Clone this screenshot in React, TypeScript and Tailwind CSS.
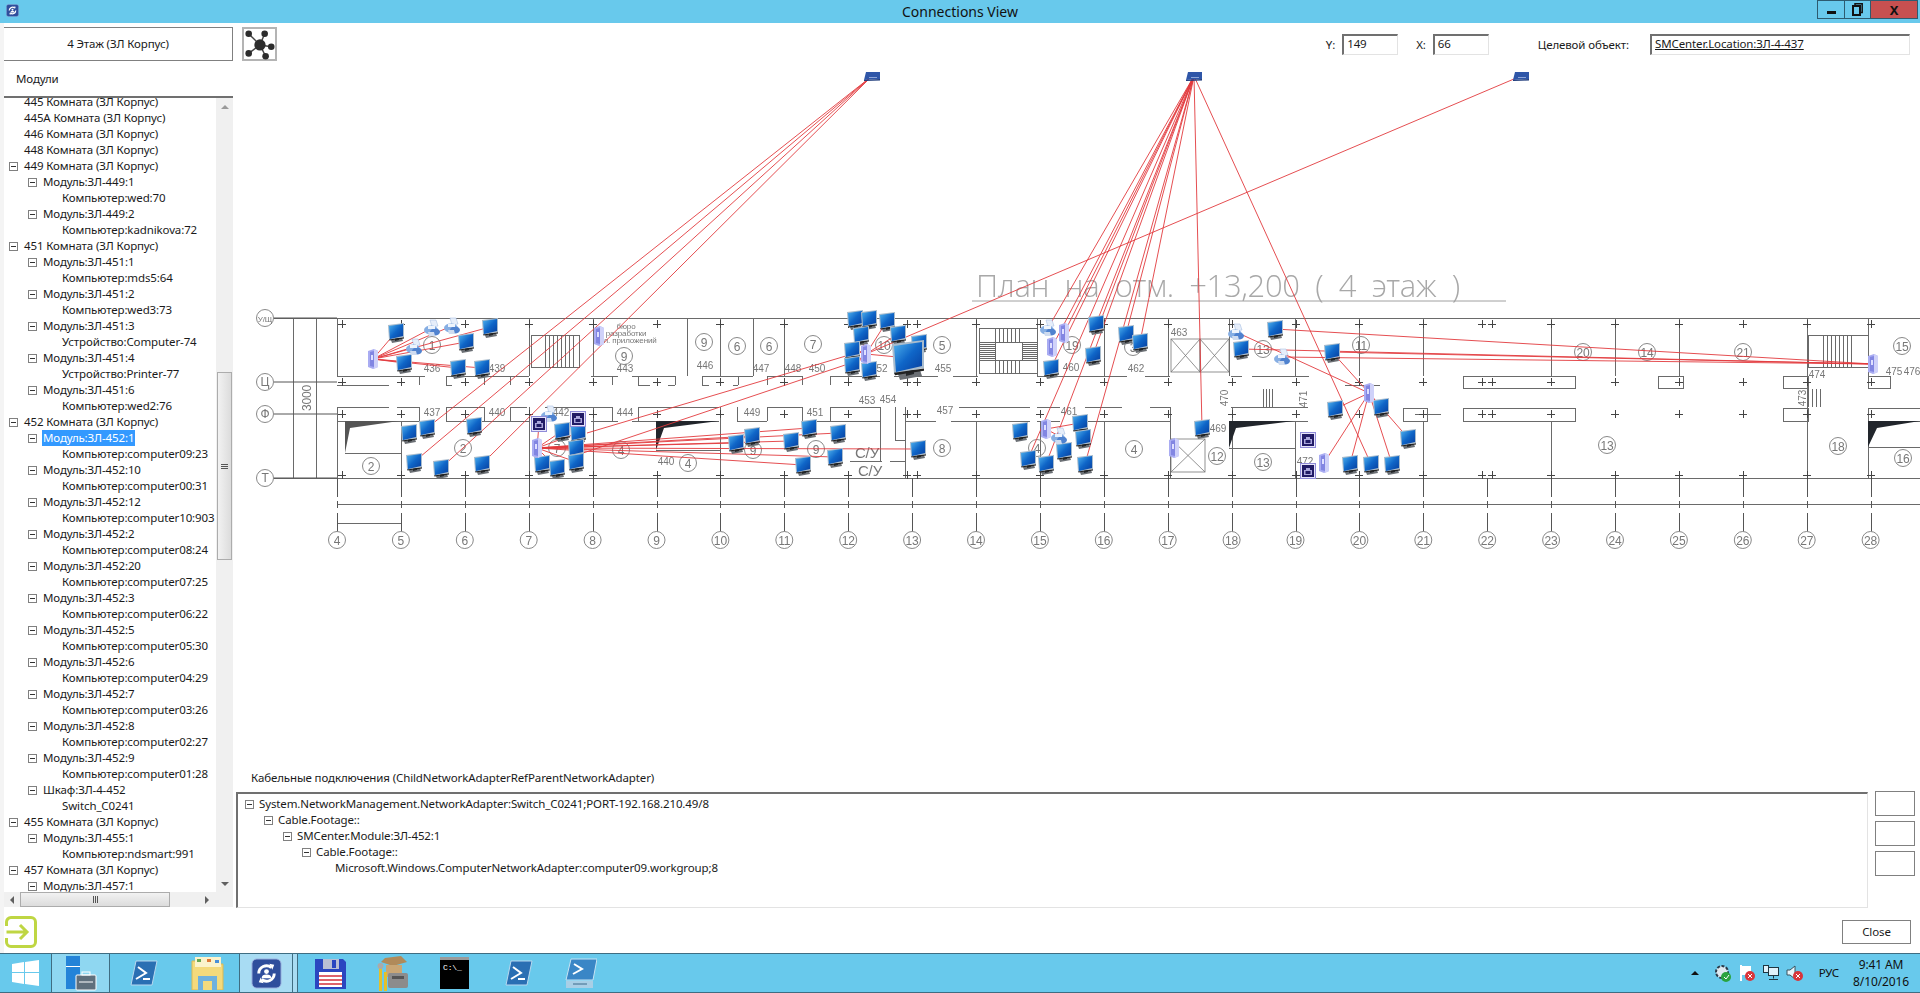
import React from "react";

type P = [number, number];
const X = (n: number) => 337 + (n - 4) * 63.9;

const rooms = (n: string) => `${n} Комната (ЗЛ Корпус)`;
const leftTree: { l: number; t: string; e?: boolean; s?: boolean }[] = [
  { l: 0, t: rooms("445") },
  { l: 0, t: rooms("445А") },
  { l: 0, t: rooms("446") },
  { l: 0, t: rooms("448") },
  { l: 0, t: rooms("449"), e: true },
  { l: 1, t: "Модуль:ЗЛ-449:1", e: true },
  { l: 2, t: "Компьютер:wed:70" },
  { l: 1, t: "Модуль:ЗЛ-449:2", e: true },
  { l: 2, t: "Компьютер:kadnikova:72" },
  { l: 0, t: rooms("451"), e: true },
  { l: 1, t: "Модуль:ЗЛ-451:1", e: true },
  { l: 2, t: "Компьютер:mds5:64" },
  { l: 1, t: "Модуль:ЗЛ-451:2", e: true },
  { l: 2, t: "Компьютер:wed3:73" },
  { l: 1, t: "Модуль:ЗЛ-451:3", e: true },
  { l: 2, t: "Устройство:Computer-74" },
  { l: 1, t: "Модуль:ЗЛ-451:4", e: true },
  { l: 2, t: "Устройство:Printer-77" },
  { l: 1, t: "Модуль:ЗЛ-451:6", e: true },
  { l: 2, t: "Компьютер:wed2:76" },
  { l: 0, t: rooms("452"), e: true },
  { l: 1, t: "Модуль:ЗЛ-452:1", e: true, s: true },
  { l: 2, t: "Компьютер:computer09:23" },
  { l: 1, t: "Модуль:ЗЛ-452:10", e: true },
  { l: 2, t: "Компьютер:computer00:31" },
  { l: 1, t: "Модуль:ЗЛ-452:12", e: true },
  { l: 2, t: "Компьютер:computer10:903" },
  { l: 1, t: "Модуль:ЗЛ-452:2", e: true },
  { l: 2, t: "Компьютер:computer08:24" },
  { l: 1, t: "Модуль:ЗЛ-452:20", e: true },
  { l: 2, t: "Компьютер:computer07:25" },
  { l: 1, t: "Модуль:ЗЛ-452:3", e: true },
  { l: 2, t: "Компьютер:computer06:22" },
  { l: 1, t: "Модуль:ЗЛ-452:5", e: true },
  { l: 2, t: "Компьютер:computer05:30" },
  { l: 1, t: "Модуль:ЗЛ-452:6", e: true },
  { l: 2, t: "Компьютер:computer04:29" },
  { l: 1, t: "Модуль:ЗЛ-452:7", e: true },
  { l: 2, t: "Компьютер:computer03:26" },
  { l: 1, t: "Модуль:ЗЛ-452:8", e: true },
  { l: 2, t: "Компьютер:computer02:27" },
  { l: 1, t: "Модуль:ЗЛ-452:9", e: true },
  { l: 2, t: "Компьютер:computer01:28" },
  { l: 1, t: "Шкаф:ЗЛ-4-452", e: true },
  { l: 2, t: "Switch_C0241" },
  { l: 0, t: rooms("455"), e: true },
  { l: 1, t: "Модуль:ЗЛ-455:1", e: true },
  { l: 2, t: "Компьютер:ndsmart:991" },
  { l: 0, t: rooms("457"), e: true },
  { l: 1, t: "Модуль:ЗЛ-457:1", e: true },
];

const cableTree: { t: string; e: boolean; pad: string }[] = [
  { t: "System.NetworkManagement.NetworkAdapter:Switch_C0241;PORT-192.168.210.49/8", e: true, pad: "pl-[7px]" },
  { t: "Cable.Footage::", e: true, pad: "pl-[26px]" },
  { t: "SMCenter.Module:ЗЛ-452:1", e: true, pad: "pl-[45px]" },
  { t: "Cable.Footage::", e: true, pad: "pl-[64px]" },
  { t: "Microsoft.Windows.ComputerNetworkAdapter:computer09.workgroup;8", e: false, pad: "pl-[83px]" },
];

const pads = ["pl-[5px]", "pl-[24px]", "pl-[43px]"];

function Exp({ hidden }: { hidden?: boolean }) {
  return (
    <span className={`flex h-[9px] w-[9px] shrink-0 items-center justify-center ${hidden ? "" : "border border-[#808080] bg-white"}`}>
      {!hidden && <span className="h-px w-[5px] bg-[#333]" />}
    </span>
  );
}

const pcs: P[] = [
  [396, 332], [490, 327], [466, 342], [404, 363], [458, 368], [482, 368],
  [409, 433], [427, 428], [474, 426], [414, 462], [441, 468], [482, 464],
  [562, 431], [578, 433], [576, 448], [576, 462], [542, 464], [557, 468],
  [736, 443], [752, 436], [791, 441], [809, 428], [838, 433], [835, 457], [803, 465],
  [855, 319], [869, 319], [887, 321], [861, 335], [898, 334], [919, 343], [852, 350], [852, 365], [869, 370],
  [918, 449], [1020, 431], [1080, 423], [1083, 438], [1064, 451], [1028, 459], [1046, 464], [1085, 464],
  [1051, 368], [1093, 355], [1096, 324], [1126, 334], [1140, 342], [1202, 428], [1275, 329], [1241, 349],
  [1332, 352], [1335, 409], [1381, 407], [1408, 438], [1350, 464], [1371, 464], [1392, 464],
];
const printers: P[] = [[432, 328], [452, 326], [414, 347], [549, 414], [1048, 328], [1059, 436], [1236, 332], [1282, 357]];
const servers: P[] = [[373, 359], [599, 336], [537, 448], [866, 354], [1064, 333], [1052, 347], [1046, 429], [1174, 448], [1369, 393], [1324, 463], [1873, 364]];
const jacks: P[] = [[539, 424], [578, 419], [1308, 440], [1308, 471]];
const tops: P[] = [[872, 76], [1194, 76], [1521, 76]];

const links: [P, P[]][] = [
  [[872, 76], [[427, 428], [414, 462], [441, 468], [482, 464]]],
  [[1194, 76], [[1028, 459], [1046, 464], [1048, 328], [1064, 333], [1052, 347], [1051, 368], [1096, 324], [1093, 355], [1085, 464], [1126, 334], [1140, 342], [1202, 428], [1371, 464]]],
  [[1521, 76], [[866, 354]]],
  [[373, 359], [[396, 332], [432, 328], [452, 326], [414, 347], [490, 327], [466, 342], [404, 363], [458, 368], [482, 368]]],
  [[537, 448], [[539, 424], [562, 431], [578, 433], [576, 448], [576, 462], [542, 464], [557, 468], [736, 443], [752, 436], [791, 441], [809, 428], [838, 433], [835, 457], [803, 465], [918, 449]]],
  [[587, 433], [[866, 350]]],
  [[583, 453], [[866, 358]]],
  [[866, 354], [[855, 319], [887, 321], [861, 335], [898, 334], [852, 350], [852, 365], [869, 370], [908, 358]]],
  [[1046, 429], [[1080, 423], [1059, 436]]],
  [[1369, 393], [[1236, 332], [1335, 409], [1332, 352], [1381, 407], [1408, 438], [1350, 464], [1392, 464], [1324, 463]]],
  [[1873, 364], [[1275, 329], [1241, 349], [1332, 352], [1282, 357]]],
];

const hSegs: [number, number, number][] = [
  [265, 1920, 318], [265, 1920, 478], [337, 1920, 504], [337, 401, 523],
  [337, 425, 376], [446, 529, 376], [591, 618, 376], [632, 676, 376], [702, 753, 376], [767, 802, 376], [830, 880, 376],
  [894, 938, 376], [953, 978, 376], [1037, 1127, 376], [1145, 1170, 376], [1231, 1242, 376], [1252, 1309, 376],
  [337, 389, 385], [446, 452, 385], [638, 650, 385], [668, 675, 385], [702, 709, 385], [733, 738, 385], [1345, 1380, 385],
  [337, 389, 407], [397, 419, 407], [446, 484, 407], [510, 527, 407], [545, 612, 407], [638, 719, 407], [767, 802, 407], [830, 880, 407],
  [959, 1030, 407], [1037, 1060, 407], [1085, 1122, 407], [1150, 1170, 407], [1231, 1308, 407],
  [337, 421, 421], [446, 529, 421], [591, 618, 421], [632, 719, 421], [737, 767, 421], [802, 880, 421],
  [905, 936, 421], [951, 1030, 421], [1037, 1060, 421], [1085, 1122, 421], [1122, 1170, 421], [1231, 1308, 421],
  [345, 401, 453], [656, 720, 450], [1229, 1295, 448], [1868, 1920, 447], [850, 882, 461], [890, 905, 461], [895, 905, 440],
  [1415, 1424, 414], [1424, 1441, 414],
];
const vSegs: [number, number, number][] = [
  [293, 318, 478], [316, 318, 478],
  [337, 318, 376], [337, 407, 478], [401, 421, 478], [529, 318, 376], [529, 407, 478], [593, 318, 376], [593, 407, 478],
  [687, 318, 376], [720, 318, 376], [753, 318, 376], [784, 318, 376], [720, 407, 478], [848, 376, 385],
  [419, 376, 385], [446, 376, 385], [484, 376, 385], [510, 376, 385], [612, 376, 385], [638, 376, 385], [675, 376, 385], [702, 376, 385], [738, 376, 385], [767, 376, 385], [802, 376, 385], [830, 376, 385],
  [419, 407, 421], [446, 407, 421], [484, 407, 421], [510, 407, 421], [612, 407, 421], [638, 407, 421], [737, 407, 421], [767, 407, 421], [802, 407, 421], [830, 407, 421],
  [880, 407, 461], [895, 407, 440], [905, 407, 478], [976, 318, 376], [976, 421, 478], [1037, 318, 376], [1040, 421, 478],
  [1104, 318, 376], [1104, 421, 478], [1168, 318, 376], [1170, 407, 478], [1229, 318, 376], [1232, 407, 478], [1295, 318, 376], [1295, 421, 478],
  [1359, 318, 376], [1423, 318, 376], [1423, 421, 478], [1551, 318, 376], [1551, 421, 478], [1615, 318, 376], [1679, 318, 376], [1807, 318, 478], [1868, 318, 376], [1868, 421, 478],
];
const boxes: [number, number, number, number][] = [
  [1463, 376, 112, 12], [1463, 408, 112, 13], [1658, 376, 25, 12], [1783, 376, 25, 12], [1783, 408, 25, 13], [1868, 376, 22, 12], [1868, 408, 52, 13], [1403, 408, 24, 13],
  [531, 335, 48, 32], [979, 328, 58, 45], [995, 342, 27, 18], [1808, 335, 60, 32],
];
const hatches: [number, number, number, number, number][] = [
  [545, 575, 335, 367, 4], [1823, 1853, 335, 367, 4], [1808, 1823, 389, 407, 4], [1263, 1274, 389, 407, 3], [995, 1022, 328, 342, 4], [995, 1022, 360, 373, 4],
];
const wedges: [string, string][] = [
  ["345,421 399,421 350,428 345,453", "#555"],
  ["656,421 719,421 664,428 656,450", "#22262c"],
  ["1229,421 1294,421 1236,428 1229,448", "#22262c"],
  ["1868,421 1920,421 1877,428 1868,447", "#22262c"],
];
const circles: [number, number, string][] = [
  [432, 345, "1"], [463, 448, "2"], [371, 466, "2"], [557, 448, "7"], [621, 450, "4"], [688, 463, "4"], [704, 342, "9"], [737, 346, "6"], [769, 346, "6"], [813, 344, "7"], [624, 356, "9"], [753, 450, "9"], [816, 449, "9"],
  [884, 345, "10"], [942, 345, "5"], [1072, 345, "19"], [1133, 347, "3"], [1037, 448, "4"], [1134, 449, "4"], [942, 448, "8"], [1217, 456, "12"], [1263, 349, "13"], [1361, 345, "11"], [1263, 462, "13"],
  [1583, 352, "20"], [1647, 352, "14"], [1743, 352, "21"], [1902, 346, "15"], [1607, 445, "13"], [1838, 446, "18"], [1903, 458, "16"],
];
const roomNums: [number, number, string][] = [
  [432, 368, "436"], [497, 368, "439"], [432, 412, "437"], [497, 412, "440"], [561, 412, "442"], [625, 368, "443"], [625, 412, "444"], [705, 365, "446"], [761, 368, "447"], [793, 368, "448"], [817, 368, "450"], [752, 412, "449"], [815, 412, "451"], [666, 461, "440"],
  [867, 400, "453"], [888, 399, "454"], [943, 368, "455"], [945, 410, "457"], [1071, 367, "460"], [1069, 411, "461"], [1136, 368, "462"], [1179, 332, "463"], [1218, 428, "469"], [1305, 461, "472"], [882, 368, "52"],
  [1817, 374, "474"], [1894, 371, "475"], [1912, 371, "476"],
];
const rotated: [number, number, string][] = [[1224, 398, "470"], [1303, 399, "471"], [1802, 398, "473"]];
const axisLeft: [number, string][] = [[318, "У/Щ"], [382, "Ц"], [414, "Ф"], [478, "Т"]];

function Pc({ x, y, s = 1 }: { x: number; y: number; s?: number }) {
  return (
    <g transform={`translate(${x} ${y}) scale(${s})`}>
      <polygon points="-5,8 6,6 7,9 -4,11" fill="#6b6f74" />
      <polygon points="-1,6 3,5 3,8 -1,9" fill="#26292c" />
      <polygon points="-8,-7 8,-9 8,5 -7,8" fill="#a9bccd" />
      <polygon points="-7,-6 7,-8 7,4 -6,7" fill="url(#scr)" />
      <polygon points="-7,7.4 8,5.2 8,6.4 -6.5,8.6" fill="#222" />
    </g>
  );
}
function Server({ x, y }: { x: number; y: number }) {
  return (
    <g transform={`translate(${x} ${y})`}>
      <polygon points="-5,-8 1,-10 5,-8 5,8 0,10 -5,8" fill="#a9acf2" />
      <polygon points="-3,-7 1,-8 1,8 -3,7" fill="#8286e2" />
      <rect x="-2" y="-4" width="2" height="5" fill="#dfe0ff" />
      <polygon points="1,-10 5,-8 5,8 1,10" fill="#cfd1f9" />
    </g>
  );
}
function Printer({ x, y }: { x: number; y: number }) {
  return (
    <g transform={`translate(${x} ${y})`}>
      <polygon points="-2,-8 4,-8 6,-2 0,-1" fill="#e6eefa" stroke="#9db7de" strokeWidth="0.5" />
      <ellipse cx="-1" cy="2" rx="7" ry="4.5" fill="#86aee3" />
      <ellipse cx="3" cy="4" rx="5" ry="3.5" fill="#4f82cf" />
      <rect x="-4" y="-2" width="7" height="3" fill="#eef4fc" />
      <polygon points="-4,4 2,4 3,8 -3,8" fill="#cfdcf0" />
    </g>
  );
}
function Jack({ x, y }: { x: number; y: number }) {
  return (
    <g transform={`translate(${x} ${y})`}>
      <rect x="-7.5" y="-7.5" width="15" height="15" fill="#e6e4fa" stroke="#8f8bd8" />
      <rect x="-6" y="-6" width="12" height="12" fill="#211b66" />
      <polygon points="-4,4 -4,-1 -2,-1 -2,-3 2,-3 2,-1 4,-1 4,4" fill="#aaa6dc" />
      <rect x="-2.5" y="0" width="5" height="3" fill="#211b66" />
    </g>
  );
}
function TopDevice({ x, y }: { x: number; y: number }) {
  return (
    <g transform={`translate(${x} ${y})`}>
      <polygon points="-6,-4 8,-4 8,3 -8,4" fill="#2f56a8" />
      <polygon points="-8,4 8,3 8,4.5 -8,5" fill="#1d3a7a" />
      <rect x="-3" y="1" width="8" height="1" fill="#8fa6d8" />
    </g>
  );
}

function FloorPlan() {
  const axisNums = Array.from({ length: 25 }, (_, i) => i + 4);
  return (
    <svg viewBox="236 64 1684 706" className="block h-[706px] w-[1684px] blur-[0.35px]">
      <defs>
        <linearGradient id="scr" x1="0" y1="0" x2="1" y2="1">
          <stop offset="0" stopColor="#4fb2ee" />
          <stop offset="0.5" stopColor="#0f66c8" />
          <stop offset="1" stopColor="#073e9e" />
        </linearGradient>
      </defs>

      <text x="976" y="297" fontFamily="Open Sans" fontWeight="300" fontSize="31" fill="#a8a8a8" textLength="484" lengthAdjust="spacing" xmlSpace="preserve">
        План  на  отм.  +13,200  (  4  этаж  )
      </text>
      <line x1="972" y1="301" x2="1506" y2="301" stroke="#a0a0a0" />

      <g stroke="#6a6a6a" strokeWidth="1" fill="none" shapeRendering="crispEdges">
        {hSegs.map(([a, b, y], i) => <line key={i} x1={a} x2={b} y1={y} y2={y} />)}
        {vSegs.map(([x, a, b], i) => <line key={i} x1={x} x2={x} y1={a} y2={b} />)}
        {boxes.map(([x, y, w, h], i) => <rect key={i} x={x} y={y} width={w} height={h} />)}
        {hatches.map(([a, b, y1, y2, st], i) =>
          Array.from({ length: Math.floor((b - a) / st) + 1 }, (_, k) => (
            <line key={`${i}-${k}`} x1={a + k * st} x2={a + k * st} y1={y1} y2={y2} />
          ))
        )}
        {[[979, 995, 328, 373], [1022, 1037, 328, 373]].map(([a, b, y1, y2], i) =>
          [0, 1, 2, 3, 4, 5, 6, 7, 8, 9].map((k) => (
            <line key={`h${i}-${k}`} x1={a} x2={b} y1={y1 + 14 + k * 2} y2={y1 + 14 + k * 2} />
          ))
        )}
      </g>

      <g stroke="#777" strokeWidth="0.8" fill="none">
        <rect x="1171" y="339" width="29" height="33" />
        <rect x="1200" y="339" width="29" height="33" />
        <path d="M1171 339 L1200 372 M1200 339 L1171 372 M1200 339 L1229 372 M1229 339 L1200 372" />
        <rect x="1171" y="439" width="34" height="33" />
        <path d="M1171 439 L1205 472 M1205 439 L1171 472" />
      </g>

      {wedges.map(([p, c], i) => <polygon key={i} points={p} fill={c} />)}

      {/* columns, crosses and axes */}
      <g stroke="#444" strokeWidth="1" fill="none" shapeRendering="crispEdges">
        {axisNums.map((n) => {
          const x = Math.round(X(n));
          const crossXs = n === 4 ? [x + 5] : n === 13 || n === 22 ? [x - 5, x + 5] : [x];
          return (
            <g key={n}>
              <line x1={x} x2={x} y1={478} y2={497} stroke="#555" />
              <line x1={x} x2={x} y1={501} y2={508} stroke="#555" />
              <line x1={x} x2={x} y1={513} y2={532} stroke="#555" />
              {crossXs.flatMap((cx) =>
                [324, 382, 414, 475].map((y) => (
                  <g key={`${cx}-${y}`}>
                    <line x1={cx - 4} x2={cx + 4} y1={y} y2={y} />
                    <line x1={cx} x2={cx} y1={y - 4} y2={y + 4} />
                  </g>
                ))
              )}
            </g>
          );
        })}
      </g>
      <g fill="none" stroke="#888" strokeWidth="1">
        {axisNums.map((n) => <circle key={n} cx={X(n)} cy={540} r={8.5} fill="#fff" />)}
        {axisLeft.map(([y, t]) => (
          <g key={t}>
            <line x1={274} x2={337} y1={y} y2={y} stroke="#555" />
            <circle cx={265} cy={y} r={8.5} fill="#fff" />
          </g>
        ))}
        {circles.map(([x, y, t], i) => <circle key={i} cx={x} cy={y} r={8.5} />)}
      </g>
      <g fontFamily="Liberation Sans" fill="#777" textAnchor="middle">
        {axisNums.map((n) => <text key={n} x={X(n)} y={544.5} fontSize="12">{n}</text>)}
        {axisLeft.map(([y, t]) => <text key={t} x={265} y={y + 4} fontSize={t.length > 1 ? 8 : 12}>{t}</text>)}
        {circles.map(([x, y, t], i) => <text key={i} x={x} y={y + 4.5} fontSize="12">{t}</text>)}
      </g>
      <g fontFamily="Liberation Sans" fill="#777" fontSize="10" textAnchor="middle">
        {roomNums.map(([x, y, t], i) => <text key={i} x={x} y={y + 3.5}>{t}</text>)}
        {rotated.map(([x, y, t], i) => <text key={i} transform={`translate(${x} ${y}) rotate(-90)`} y={3.5}>{t}</text>)}
        <text transform="translate(311 398) rotate(-90)" fontSize="12">3000</text>
        <text x="867" y="458" fontSize="15">С/У</text>
        <text x="870" y="476" fontSize="15">С/У</text>
        <text x="626" y="329" fontSize="8">бюро</text>
        <text x="626" y="336" fontSize="8">разработки</text>
        <text x="628" y="343" fontSize="8">пл. приложений</text>
      </g>

      <g stroke="#e23a3d" strokeWidth="0.9" fill="none">
        {links.flatMap(([from, tos], i) =>
          tos.map((to, j) => <line key={`${i}-${j}`} x1={from[0]} y1={from[1]} x2={to[0]} y2={to[1]} />)
        )}
      </g>

      {pcs.map(([x, y], i) => <Pc key={i} x={x} y={y} />)}
      <Pc x={908} y={358} s={2} />
      {servers.map(([x, y], i) => <Server key={i} x={x} y={y} />)}
      {printers.map(([x, y], i) => <Printer key={i} x={x} y={y} />)}
      {jacks.map(([x, y], i) => <Jack key={i} x={x} y={y} />)}
      {tops.map(([x, y], i) => <TopDevice key={i} x={x} y={y} />)}
    </svg>
  );
}

function AppIcon({ size }: { size: number }) {
  return (
    <svg width={size} height={size} viewBox="0 0 32 32">
      <rect x="1" y="1" width="30" height="30" rx="5" fill="#2f4e9c" stroke="#9fb4e0" />
      <path d="M8 16a8 8 0 0 1 13-6.2" fill="none" stroke="#fff" strokeWidth="3" />
      <path d="M24 16a8 8 0 0 1-13 6.2" fill="none" stroke="#fff" strokeWidth="3" />
      <path d="M19 6l5 1-2 5zM13 26l-5-1 2-5z" fill="#fff" />
      <circle cx="16" cy="14" r="2.5" fill="#fff" />
      <path d="M11 21c0-3 2-4 5-4s5 1 5 4z" fill="#fff" />
    </svg>
  );
}

function NetworkGlyph() {
  return (
    <svg width="33" height="32" viewBox="0 0 33 32">
      <g stroke="#444" strokeWidth="1.5">
        <line x1="17" y1="17" x2="5" y2="5" />
        <line x1="17" y1="17" x2="22" y2="5" />
        <line x1="17" y1="17" x2="29" y2="19" />
        <line x1="17" y1="17" x2="23" y2="29" />
        <line x1="17" y1="17" x2="5" y2="26" />
      </g>
      <g fill="#2c2c2c">
        <circle cx="17" cy="17" r="6" />
        <circle cx="5" cy="5" r="3.5" />
        <circle cx="22" cy="5" r="3.5" />
        <circle cx="29" cy="19" r="3.5" />
        <circle cx="23" cy="29" r="3.5" />
        <circle cx="5" cy="26" r="3.5" />
      </g>
    </svg>
  );
}

function TriUp() {
  return <span className="h-0 w-0 border-x-[4px] border-b-[4px] border-x-transparent border-b-[#9a9a9a]" />;
}
function TriDown() {
  return <span className="h-0 w-0 border-x-[4px] border-t-[4px] border-x-transparent border-t-[#606060]" />;
}
function TriLeft() {
  return <span className="h-0 w-0 border-y-[4px] border-r-[4px] border-y-transparent border-r-[#606060]" />;
}
function TriRight() {
  return <span className="h-0 w-0 border-y-[4px] border-l-[4px] border-y-transparent border-l-[#606060]" />;
}

function SideTree() {
  return (
    <div className="flex min-h-0 flex-1 flex-col border-t-2 border-[#707070] pb-px">
      <div className="flex min-h-0 flex-1">
        <div className="min-w-0 flex-1 overflow-hidden">
          <div className="-mt-[4px]">
            {leftTree.map((r, i) => (
              <div key={i} className={`flex h-4 items-center gap-[6px] whitespace-nowrap ${pads[r.l]}`}>
                <Exp hidden={!r.e} />
                <span className={r.s ? "-ml-px bg-[#3399ff] px-px text-white" : ""}>{r.t}</span>
              </div>
            ))}
          </div>
        </div>
        <div className="flex w-[17px] shrink-0 flex-col items-center bg-[#f0f0f0]">
          <div className="flex h-[17px] items-center justify-center"><TriUp /></div>
          <div className="mt-[257px] flex h-[188px] w-[15px] items-center justify-center border border-[#acacac] bg-gradient-to-r from-[#f2f2f2] to-[#dcdcdc]">
            <div className="flex flex-col gap-px">
              <span className="h-px w-[7px] bg-[#555]" />
              <span className="h-px w-[7px] bg-[#555]" />
              <span className="h-px w-[7px] bg-[#555]" />
            </div>
          </div>
          <div className="mt-auto flex h-[17px] items-center justify-center"><TriDown /></div>
        </div>
      </div>
      <div className="flex h-[15px] shrink-0 items-center bg-[#f0f0f0]">
        <div className="flex w-[16px] justify-center"><TriLeft /></div>
        <div className="flex h-[15px] w-[150px] items-center justify-center border border-[#acacac] bg-gradient-to-b from-[#f2f2f2] to-[#dcdcdc]">
          <div className="flex gap-px">
            <span className="h-[7px] w-px bg-[#555]" />
            <span className="h-[7px] w-px bg-[#555]" />
            <span className="h-[7px] w-px bg-[#555]" />
          </div>
        </div>
        <div className="ml-[33px] flex w-[8px] justify-center"><TriRight /></div>
      </div>
    </div>
  );
}

function PsIcon() {
  return (
    <svg width="28" height="28" viewBox="0 0 28 28">
      <polygon points="6,2 27,2 22,26 1,26" fill="#2a6fb3" stroke="#b8d8ee" />
      <path d="M8 8l8 6-10 6" fill="none" stroke="#fff" strokeWidth="2" />
      <rect x="13" y="19" width="7" height="2" fill="#fff" />
    </svg>
  );
}

function Taskbar() {
  return (
    <div className="flex h-[40px] shrink-0 items-center border-y border-[#3f6d82] bg-[#68c9ec]">
      <div className="flex w-[51px] justify-center">
        <svg width="27" height="26" viewBox="0 0 27 26">
          <polygon points="0,4 12,2 12,12 0,12" fill="#fff" />
          <polygon points="13,2 27,0 27,12 13,12" fill="#fff" />
          <polygon points="0,13 12,13 12,24 0,22" fill="#fff" />
          <polygon points="13,13 27,13 27,26 13,24" fill="#fff" />
        </svg>
      </div>
      <div className="flex h-full w-[59px] items-center justify-center border-x border-[#3f6d82] bg-[#8fd7f1]">
        <svg width="34" height="36" viewBox="0 0 34 36">
          <rect x="2" y="1" width="14" height="24" fill="#2383d8" />
          <rect x="2" y="11" width="14" height="1" fill="#fff" />
          <rect x="2" y="24" width="14" height="10" fill="#2383d8" />
          <rect x="12" y="20" width="20" height="15" rx="1" fill="#5f6f7c" stroke="#fff" />
          <rect x="18" y="17" width="8" height="3" fill="none" stroke="#fff" />
          <path d="M15 27h14" stroke="#fff" />
        </svg>
      </div>
      <div className="ml-[20px]"><PsIcon /></div>
      <div className="ml-[33px]">
        <svg width="33" height="34" viewBox="0 0 33 34">
          <path d="M1 5h12l3 3h16v26H1z" fill="#f4da7c" stroke="#d9b955" />
          <rect x="4" y="1" width="26" height="10" fill="#fbf3cd" />
          <rect x="6" y="3" width="4" height="3" fill="#6aa84f" />
          <rect x="16" y="3" width="4" height="3" fill="#e07b39" />
          <rect x="24" y="4" width="4" height="3" fill="#4a90d9" />
          <rect x="7" y="20" width="19" height="14" fill="#6fb1de" />
          <rect x="12" y="25" width="9" height="9" fill="#f4da7c" />
        </svg>
      </div>
      <div className="ml-[15px] flex h-full w-[54px] items-center justify-center border-x border-[#3f6d82] bg-[#a8dcf3]">
        <AppIcon size={31} />
      </div>
      <div className="h-full w-[5px] border-r border-[#3f6d82] bg-[#a8dcf3]" />
      <div className="ml-[16px]">
        <svg width="33" height="33" viewBox="0 0 33 33">
          <path d="M1 2h28l3 3v27H1z" fill="#2a46c0" />
          <rect x="9" y="2" width="16" height="10" fill="#b9bfd4" />
          <rect x="18" y="3" width="4" height="8" fill="#2a46c0" />
          <rect x="5" y="15" width="23" height="15" fill="#fff" />
          <path d="M5 19h23M5 23h23M5 27h23" stroke="#d2303c" strokeWidth="1.5" />
        </svg>
      </div>
      <div className="ml-[30px]">
        <svg width="32" height="38" viewBox="0 0 32 38">
          <polygon points="8,4 24,2 30,8 16,12 4,8" fill="#b08a5a" />
          <rect x="9" y="11" width="16" height="12" fill="#c9a675" />
          <rect x="11" y="19" width="20" height="15" rx="2" fill="#8c8c8c" />
          <rect x="15" y="22" width="12" height="3" fill="#555" />
          <rect x="2" y="12" width="3" height="25" fill="#e3c02b" />
          <rect x="7" y="18" width="3" height="19" fill="#e3c02b" />
          <circle cx="3.5" cy="12" r="3" fill="#aaa" />
        </svg>
      </div>
      <div className="ml-[31px] flex h-[32px] w-[29px] flex-col bg-black">
        <div className="h-[3px] bg-[#999]" />
        <span className="pl-[3px] pt-[3px] font-['Liberation_Mono'] text-[8px] leading-[10px] text-white">C:\_</span>
      </div>
      <div className="ml-[36px]"><PsIcon /></div>
      <div className="ml-[32px]">
        <svg width="32" height="31" viewBox="0 0 32 31">
          <polygon points="6,1 32,1 28,22 1,22" fill="#3a86c6" stroke="#c7e3f3" />
          <path d="M9 6l8 5-9 5" fill="none" stroke="#fff" strokeWidth="2" />
          <rect x="1" y="23" width="27" height="7" fill="#a9cfe6" />
          <path d="M8 26h14" stroke="#3c6b8b" />
        </svg>
      </div>
      <div className="ml-auto flex items-center">
        <TriUpBlack />
        <div className="ml-[15px]">
          <svg width="18" height="18" viewBox="0 0 18 18">
            <circle cx="8" cy="8" r="6" fill="#dfe9f0" stroke="#2b3b4a" strokeDasharray="3 1.5" strokeWidth="2" />
            <circle cx="12" cy="13" r="5" fill="#29a33f" />
            <path d="M10 13l2 2 3-4" fill="none" stroke="#fff" />
          </svg>
        </div>
        <div className="ml-[6px]">
          <svg width="18" height="18" viewBox="0 0 18 18">
            <path d="M3 1v16" stroke="#fff" strokeWidth="2" />
            <path d="M4 2h9v9H4z" fill="#fff" />
            <circle cx="12" cy="12" r="5" fill="#d9343a" />
            <path d="M10 10l4 4M14 10l-4 4" stroke="#fff" />
          </svg>
        </div>
        <div className="ml-[6px]">
          <svg width="18" height="18" viewBox="0 0 18 18">
            <rect x="1.5" y="1.5" width="5" height="7" fill="#dff1fa" stroke="#1f3540" />
            <rect x="6.5" y="3.5" width="10" height="8" fill="#dff1fa" stroke="#1f3540" />
            <path d="M11.5 11.5v3M7 15.5h9" stroke="#1f3540" />
          </svg>
        </div>
        <div className="ml-[6px]">
          <svg width="18" height="18" viewBox="0 0 18 18">
            <path d="M1 6h3l5-4v13l-5-4H1z" fill="#e8f4fa" stroke="#38525f" />
            <circle cx="12" cy="12" r="5" fill="#d9343a" />
            <path d="M10 10l4 4M14 10l-4 4" stroke="#fff" />
          </svg>
        </div>
        <span className="ml-[15px] text-[#111]">РУС</span>
        <div className="ml-[14px] mr-[11px] flex flex-col items-center text-[12px] leading-[17px] text-[#111]">
          <span>9:41 AM</span>
          <span>8/10/2016</span>
        </div>
      </div>
    </div>
  );
}
function TriUpBlack() {
  return <span className="h-0 w-0 border-x-[4px] border-b-[4px] border-x-transparent border-b-[#111]" />;
}

export default function App() {
  return (
    <div className="flex h-[993px] w-[1920px] flex-col overflow-hidden bg-white font-['Noto_Sans',sans-serif] text-[11.5px] leading-4 tracking-[-0.12px] text-[#1a1a1a]">
      {/* title bar */}
      <div className="flex h-[23px] shrink-0 bg-[#68c9ec]">
        <div className="flex h-[19px] w-[103px] items-center pl-[6px] pt-[2px]"><AppIcon size={13} /></div>
        <div className="flex-1 pt-[2px] text-center text-[14px] leading-[19px] tracking-normal text-[#111]">Connections View</div>
        <div className="flex w-[103px]">
          <div className="flex h-[19px] w-[28px] items-end justify-center border border-[#2d5b70] pb-[4px]">
            <span className="h-[3px] w-[9px] bg-[#111]" />
          </div>
          <div className="flex h-[19px] w-[26px] items-center justify-center border-y border-r border-[#2d5b70]">
            <svg width="11" height="13" viewBox="0 0 11 13" fill="none" stroke="#111" strokeWidth="1.5">
              <path d="M3 2.5V.8h7.2v8.7H8" />
              <rect x="1" y="3" width="7" height="9" strokeWidth="2" />
            </svg>
          </div>
          <div className="flex h-[19px] w-[47px] items-center justify-center border-y border-r border-[#2d5b70] bg-[#c75050] text-[13px] font-bold text-[#111]">X</div>
        </div>
      </div>

      <div className="flex min-h-0 flex-1 flex-col border-l-4 border-[#f4f4f4]">
        <div className="flex h-[885px]">
          {/* left column */}
          <div className="flex w-[229px] shrink-0 flex-col">
            <button className="mt-[4px] h-[34px] shrink-0 border-y border-r border-[#808080] bg-white text-center">4 Этаж (ЗЛ Корпус)</button>
            <div className="flex h-[35px] shrink-0 items-center pl-[12px]">Модули</div>
            <SideTree />
          </div>

          {/* right column */}
          <div className="flex min-w-0 flex-1 flex-col">
            <div className="flex h-[41px] shrink-0">
              <button className="ml-[9px] mt-[4px] flex h-[34px] w-[35px] items-center justify-center border-2 border-[#b4b4b4]">
                <NetworkGlyph />
              </button>
              <div className="ml-auto flex items-center gap-0 pt-[2px]">
                <span className="mr-[7px]">Y:</span>
                <div className="h-[21px] w-[56px] border-l-2 border-t-2 border-r border-b border-l-[#707070] border-t-[#707070] border-r-[#e3e3e3] border-b-[#e3e3e3] pl-[3px]">149</div>
                <span className="ml-[18px] mr-[7px]">X:</span>
                <div className="h-[21px] w-[56px] border-l-2 border-t-2 border-r border-b border-l-[#707070] border-t-[#707070] border-r-[#e3e3e3] border-b-[#e3e3e3] pl-[3px]">66</div>
                <span className="ml-[49px] mr-[21px]">Целевой объект:</span>
                <div className="mr-[10px] h-[21px] w-[260px] border-l-2 border-t-2 border-r border-b border-l-[#707070] border-t-[#707070] border-r-[#e3e3e3] border-b-[#e3e3e3] pl-[3px] underline">SMCenter.Location:ЗЛ-4-437</div>
              </div>
            </div>
            <div className="ml-[3px] h-[706px] shrink-0">
              <FloorPlan />
            </div>
            <div className="flex h-[22px] shrink-0 items-center pb-[8px] pl-[18px] pt-[2px]">Кабельные подключения (ChildNetworkAdapterRefParentNetworkAdapter)</div>
            <div className="flex h-[116px] shrink-0 pl-[3px]">
              <div className="w-[1632px] border-l-2 border-t-2 border-b border-r border-l-[#707070] border-t-[#707070] border-b-[#e3e3e3] border-r-[#e3e3e3] pt-[2px]">
                {cableTree.map((r, i) => (
                  <div key={i} className={`flex h-4 items-center gap-[5px] whitespace-nowrap ${r.pad}`}>
                    <Exp hidden={!r.e} />
                    <span>{r.t}</span>
                  </div>
                ))}
              </div>
              <div className="ml-[7px] flex flex-col gap-[5px]">
                <div className="-mt-px h-[25px] w-[40px] border border-[#808080]" />
                <div className="h-[25px] w-[40px] border border-[#808080]" />
                <div className="h-[25px] w-[40px] border border-[#808080]" />
              </div>
            </div>
          </div>
        </div>

        {/* footer row */}
        <div className="flex flex-1 items-start justify-between">
          <div className="ml-px mt-[8px]">
            <svg width="32" height="32" viewBox="0 0 32 32" fill="none" stroke="#bfd643" strokeWidth="3">
              <path d="M1.5 10V6a4.5 4.5 0 0 1 4.5-4.5h20A4.5 4.5 0 0 1 30.5 6v20a4.5 4.5 0 0 1-4.5 4.5H6A4.5 4.5 0 0 1 1.5 26v-4" />
              <path d="M1.5 16H22M15 9l7 7-7 7" />
            </svg>
          </div>
          <button className="mr-[9px] mt-[12px] h-[24px] w-[69px] border border-[#808080] bg-white">Close</button>
        </div>
      </div>

      <Taskbar />
    </div>
  );
}
